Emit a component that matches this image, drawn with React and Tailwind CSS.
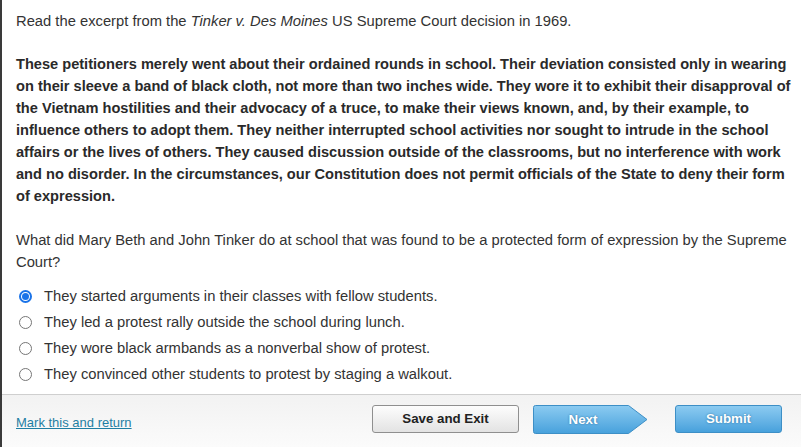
export default function App() {
  const options = [
    "They started arguments in their classes with fellow students.",
    "They led a protest rally outside the school during lunch.",
    "They wore black armbands as a nonverbal show of protest.",
    "They convinced other students to protest by staging a walkout.",
  ];
  return (
    <div className="w-[801px] h-[447px] flex bg-white text-[#333] overflow-hidden" style={{ fontFamily: '"Liberation Sans", Arial, sans-serif' }}>
      <div className="w-[2px] bg-[#3a3a3a] shrink-0" />
      <div className="flex-1 flex flex-col">
        <div className="flex-1 pl-[14px] pr-[4px] pt-[10px] text-[14.75px] leading-[22px]">
          <p>Read the excerpt from the <i>Tinker v. Des Moines</i> US Supreme Court decision in 1969.</p>
          <p className="mt-[21px] font-bold text-[#2a2a2a] text-[14.6px]">
            These petitioners merely went about their ordained rounds in school. Their deviation consisted only in wearing on their sleeve a band of black cloth, not more than two inches wide. They wore it to exhibit their disapproval of the Vietnam hostilities and their advocacy of a truce, to make their views known, and, by their example, to influence others to adopt them. They neither interrupted school activities nor sought to intrude in the school affairs or the lives of others. They caused discussion outside of the classrooms, but no interference with work and no disorder. In the circumstances, our Constitution does not permit officials of the State to deny their form of expression.
          </p>
          <p className="mt-[22px]">What did Mary Beth and John Tinker do at school that was found to be a protected form of expression by the Supreme Court?</p>
          <div className="mt-[10px] flex flex-col">
            {options.map((o, i) => (
              <label key={i} className="flex items-center h-[26px]">
                <span className="w-[28px] flex items-center justify-start pl-[3px]">
                  {i === 0 ? (
                    <span className="w-[13px] h-[13px] rounded-full border-2 border-[#1a73e8] flex items-center justify-center">
                      <span className="w-[7px] h-[7px] rounded-full bg-[#1a73e8]" />
                    </span>
                  ) : (
                    <span className="w-[13px] h-[13px] rounded-full border border-[#767676] bg-white" />
                  )}
                </span>
                <span>{o}</span>
              </label>
            ))}
          </div>
        </div>
        <div className="h-[53px] shrink-0 border-t border-[#cfcfcf] bg-gradient-to-b from-[#f2f2f2] to-[#fbfbfb] flex items-start pt-[10px] pl-[14px] pr-[19px]">
          <a className="text-[13px] leading-[15px] text-[#1f7fa3] underline mt-[10px]" href="#">Mark this and return</a>
          <div className="flex-1" />
          <button className="w-[147px] h-[28px] rounded-[3px] border border-[#8f8f8f] bg-gradient-to-b from-[#fdfdfd] to-[#e3e3e3] text-[13.3px] font-bold text-[#222] mr-[14px]">Save and Exit</button>
          <div className="relative w-[115px] h-[29px] mr-[27px]">
            <svg width="115" height="29" viewBox="0 0 115 29" className="absolute inset-0">
              <defs>
                <linearGradient id="gb" x1="0" y1="0" x2="0" y2="1">
                  <stop offset="0" stopColor="#8ccbf1" />
                  <stop offset="1" stopColor="#47a1dc" />
                </linearGradient>
              </defs>
              <path d="M2.5 0.5 H95.5 L114 14.5 L95.5 28.5 H2.5 Q0.5 28.5 0.5 26.5 V2.5 Q0.5 0.5 2.5 0.5 Z" fill="url(#gb)" stroke="#3d8fc6" />
            </svg>
            <span className="absolute left-0 top-0 w-[100px] h-[29px] flex items-center justify-center text-white text-[13.3px] font-bold [text-shadow:0_0_2px_#2a6f9f]">Next</span>
          </div>
          <button className="w-[107px] h-[28px] rounded-[3px] border border-[#3d8fc6] bg-gradient-to-b from-[#8ccbf1] to-[#47a1dc] text-[13.3px] font-bold text-white [text-shadow:0_0_2px_#2a6f9f]">Submit</button>
        </div>
      </div>
    </div>
  );
}
